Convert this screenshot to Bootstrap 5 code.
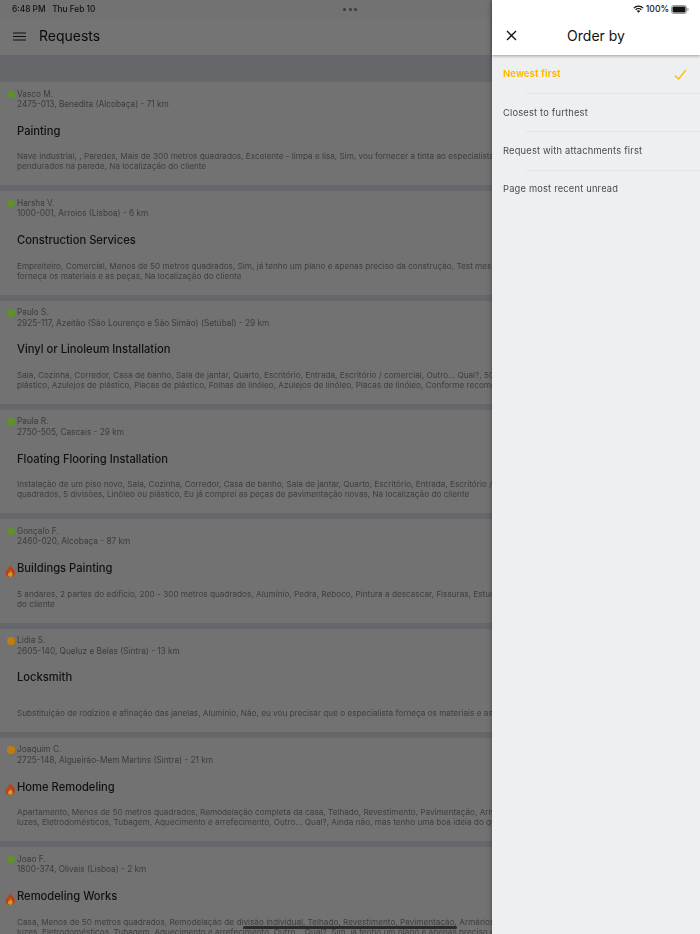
<!DOCTYPE html>
<html lang="en">
<head>
<meta charset="utf-8">
<title>Requests</title>
<link href="https://cdn.jsdelivr.net/npm/bootstrap@5.3.0/dist/css/bootstrap.min.css" rel="stylesheet">
<style>
html,body{margin:0;height:934px;overflow:hidden;background:#727272;}
body{font-family:Inter,"Noto Sans",sans-serif;}
.shell{width:700px;height:934px;position:relative;overflow:hidden;}
.dimside{width:492px;height:934px;overflow:hidden;background:#727272;flex:none;}
.dimwide{width:700px;filter:blur(.35px);}
.statusline{height:18px;font-size:8.3px;font-weight:500;color:#111;padding:0 12px;}
.statusline .grow{flex:1 1 0;}
.dots{display:flex;gap:2.5px;}
.dots i{width:3px;height:3px;border-radius:50%;background:#3a3a3a;display:block;}
.reqhead{height:37px;padding-left:13px;gap:13px;background:#747474;}
.reqhead h1{font-size:14px;font-weight:400;margin:0;color:#0a0a0a;}
.filterstrip{height:27px;background:#65676a;}
.reqlist{background:#65676a;}
.reqitem{height:103.33px;margin-bottom:6px;background:#727272;padding:6.5px 0 14px 7px;}
.who{font-size:8.27px;line-height:10.5px;color:#3c3c3c;gap:2.5px;}
.pin{width:7.5px;height:7.5px;border-radius:50%;flex:none;margin-top:2px;display:block;}
.pin-g{background:#5f9129;}
.pin-o{background:#c27b0c;}
.who-lines{white-space:nowrap;}
.job{font-size:11.2px;font-weight:500;line-height:14px;color:#111;margin:14.3px 0 0 10px;position:relative;}
.flame{position:absolute;left:-12.5px;top:3.5px;width:10.5px;height:12px;}
.desc{font-size:8.2px;line-height:10px;color:#3e3e3e;margin:auto 0 0 10px;white-space:nowrap;}
.orderside{width:208px;height:934px;background:#eeeff1;flex:none;box-shadow:0 0 5px rgba(0,0,0,.35);position:relative;}
.ordertop{background:#fff;height:55px;box-shadow:0 1px 3px rgba(0,0,0,.35);position:relative;}
.ordertop .sb{height:18px;font-size:8.6px;font-weight:500;color:#111;padding-right:11px;gap:2px;}
.ordertitle{height:37px;position:relative;}
.ordertitle h2{font-size:14px;font-weight:400;margin:0;color:#111;}
.xbtn{position:absolute;left:14px;top:12px;width:11px;height:11px;display:block;}
.opts{padding:0;margin:0;list-style:none;filter:blur(.25px);}
.opts li{height:38.2px;font-size:9.3px;color:#4a4a4a;padding:1px 0 0 11px;position:relative;letter-spacing:.2px;}
.opts li+li::before{content:"";position:absolute;left:34px;right:0;top:0;border-top:1px solid #e3e4e6;}
.opts li.on{color:#ffba00;font-weight:700;padding-top:0;}
.tick{position:absolute;right:13px;top:14px;width:13px;height:11px;}
.homebar{position:absolute;left:243px;top:926px;width:214px;height:3px;border-radius:2px;background:#2c2c2c;}
</style>
</head>
<body>
<div class="shell d-flex">
  <div class="dimside">
    <div class="dimwide">
      <div class="statusline d-flex align-items-center">
        <span class="grow">6:48 PM&nbsp;&nbsp;&nbsp;Thu Feb 10</span>
        <span class="dots"><i></i><i></i><i></i></span>
        <span class="grow"></span>
      </div>
      <div class="reqhead d-flex align-items-center">
        <svg width="13" height="9" viewBox="0 0 13 9"><path d="M0 1h13M0 4.500h13M0 8h13" stroke="#111" stroke-width="1.200"/></svg>
        <h1>Requests</h1>
      </div>
      <div class="filterstrip"></div>
      <div class="reqlist">

        <div class="reqitem d-flex flex-column">
          <div class="who d-flex"><span class="pin pin-g"></span><div class="who-lines">Vasco M.<br>2475-013, Benedita (Alcobaça) - 71 km</div></div>
          <div class="job">Painting</div>
          <div class="desc">Nave industrial, , Paredes, Mais de 300 metros quadrados, Excelente - limpa e lisa, Sim, vou fornecer a tinta ao especialista<br>pendurados na parede, Na localização do cliente</div>
        </div>

        <div class="reqitem d-flex flex-column">
          <div class="who d-flex"><span class="pin pin-g"></span><div class="who-lines">Harsha V.<br>1000-001, Arroios (Lisboa) - 6 km</div></div>
          <div class="job">Construction Services</div>
          <div class="desc">Empreiteiro, Comercial, Menos de 50 metros quadrados, Sim, já tenho um plano e apenas preciso da construção, Test mess<br>forneça os materiais e as peças, Na localização do cliente</div>
        </div>

        <div class="reqitem d-flex flex-column">
          <div class="who d-flex"><span class="pin pin-g"></span><div class="who-lines">Paulo S.<br>2925-117, Azeitão (São Lourenço e São Simão) (Setúbal) - 29 km</div></div>
          <div class="job">Vinyl or Linoleum Installation</div>
          <div class="desc">Sala, Cozinha, Corredor, Casa de banho, Sala de jantar, Quarto, Escritório, Entrada, Escritório / comercial, Outro... Qual?, 50<br>plástico, Azulejos de plástico, Placas de plástico, Folhas de linóleo, Azulejos de linóleo, Placas de linóleo, Conforme recome</div>
        </div>

        <div class="reqitem d-flex flex-column">
          <div class="who d-flex"><span class="pin pin-g"></span><div class="who-lines">Paula R.<br>2750-505, Cascais - 29 km</div></div>
          <div class="job">Floating Flooring Installation</div>
          <div class="desc">Instalação de um piso novo, Sala, Cozinha, Corredor, Casa de banho, Sala de jantar, Quarto, Escritório, Entrada, Escritório /<br>quadrados, 5 divisões, Linóleo ou plástico, Eu já comprei as peças de pavimentação novas, Na localização do cliente</div>
        </div>

        <div class="reqitem d-flex flex-column">
          <div class="who d-flex"><span class="pin pin-g"></span><div class="who-lines">Gonçalo F.<br>2460-020, Alcobaça - 87 km</div></div>
          <div class="job"><svg class="flame" viewBox="0 0 12 14"><path d="M6 0c.6 2.400 4.800 4.400 5.400 8.200C11.900 11.500 9.200 14 6 14S.2 11.700.6 8.600c.2-1.600 1-2.800 1.700-3.600.2 1 .6 1.700 1.300 2C3.400 4.400 4.400 1.800 6 0z" fill="#b8431a"/><path d="M6.200 6.500c.4 1.500 2.500 2.700 2.500 4.600 0 1.600-1.200 2.700-2.700 2.700s-2.700-1.100-2.700-2.600c0-1 .6-1.800 1.200-2.300.1.500.3.800.7 1 0-1.400.3-2.600 1-3.400z" fill="#cf9a2a"/></svg>Buildings Painting</div>
          <div class="desc">5 andares, 2 partes do edifício, 200 - 300 metros quadrados, Alumínio, Pedra, Reboco, Pintura a descascar, Fissuras, Estuc<br>do cliente</div>
        </div>

        <div class="reqitem d-flex flex-column">
          <div class="who d-flex"><span class="pin pin-o"></span><div class="who-lines">Lidia S.<br>2605-140, Queluz e Belas (Sintra) - 13 km</div></div>
          <div class="job">Locksmith</div>
          <div class="desc">Substituição de rodízios e afinação das janelas, Alumínio, Não, eu vou precisar que o especialista forneça os materiais e as</div>
        </div>

        <div class="reqitem d-flex flex-column">
          <div class="who d-flex"><span class="pin pin-o"></span><div class="who-lines">Joaquim C.<br>2725-148, Algueirão-Mem Martins (Sintra) - 21 km</div></div>
          <div class="job"><svg class="flame" viewBox="0 0 12 14"><path d="M6 0c.6 2.400 4.800 4.400 5.400 8.200C11.900 11.500 9.200 14 6 14S.2 11.700.6 8.600c.2-1.600 1-2.800 1.700-3.600.2 1 .6 1.700 1.300 2C3.400 4.400 4.400 1.800 6 0z" fill="#b8431a"/><path d="M6.200 6.500c.4 1.500 2.500 2.700 2.500 4.600 0 1.600-1.200 2.700-2.700 2.700s-2.700-1.100-2.700-2.600c0-1 .6-1.800 1.200-2.300.1.500.3.800.7 1 0-1.400.3-2.600 1-3.400z" fill="#cf9a2a"/></svg>Home Remodeling</div>
          <div class="desc">Apartamento, Menos de 50 metros quadrados, Remodelação completa da casa, Telhado, Revestimento, Pavimentação, Arm<br>luzes, Eletrodomésticos, Tubagem, Aquecimento e arrefecimento, Outro... Qual?, Ainda não, mas tenho uma boa ideia do qu</div>
        </div>

        <div class="reqitem d-flex flex-column">
          <div class="who d-flex"><span class="pin pin-g"></span><div class="who-lines">Joao F.<br>1800-374, Olivais (Lisboa) - 2 km</div></div>
          <div class="job"><svg class="flame" viewBox="0 0 12 14"><path d="M6 0c.6 2.400 4.800 4.400 5.400 8.200C11.900 11.500 9.200 14 6 14S.2 11.700.6 8.600c.2-1.600 1-2.800 1.700-3.600.2 1 .6 1.700 1.300 2C3.400 4.400 4.400 1.800 6 0z" fill="#b8431a"/><path d="M6.200 6.500c.4 1.500 2.500 2.700 2.500 4.600 0 1.600-1.200 2.700-2.700 2.700s-2.700-1.100-2.700-2.600c0-1 .6-1.800 1.200-2.300.1.500.3.800.7 1 0-1.400.3-2.600 1-3.400z" fill="#cf9a2a"/></svg>Remodeling Works</div>
          <div class="desc">Casa, Menos de 50 metros quadrados, Remodelação de divisão individual, Telhado, Revestimento, Pavimentação, Armários<br>luzes, Eletrodomésticos, Tubagem, Aquecimento e arrefecimento, Outro... Qual?, Sim, já tenho um plano e apenas preciso d</div>
        </div>

      </div>
    </div>
  </div>
  <div class="homebar"></div>
  <div class="orderside">
    <div class="ordertop">
      <div class="sb d-flex align-items-center justify-content-end">
        <svg width="11" height="8" viewBox="0 0 11 8"><path d="M.4 2.700a7.200 7.200 0 0 1 10.200 0l-.9.900a5.900 5.900 0 0 0-8.400 0zM2.100 4.400a4.800 4.800 0 0 1 6.800 0l-.9.900a3.500 3.500 0 0 0-5 0zM3.800 6.100a2.400 2.400 0 0 1 3.400 0L5.500 7.800z" fill="#111"/></svg>
        <span>100%</span>
        <svg width="18" height="9" viewBox="0 0 18 9"><rect x=".5" y=".5" width="15" height="8" rx="2" fill="none" stroke="#999"/><rect x="1.500" y="1.500" width="13" height="6" rx="1" fill="#111"/><rect x="16.300" y="3" width="1.200" height="3" rx=".6" fill="#999"/></svg>
      </div>
      <div class="ordertitle d-flex align-items-center justify-content-center">
        <svg class="xbtn" viewBox="0 0 11 11"><path d="M1 1l9 9M10 1l-9 9" stroke="#111" stroke-width="1.300" fill="none"/></svg>
        <h2>Order by</h2>
      </div>
    </div>
    <ul class="opts">
      <li class="on d-flex align-items-center">Newest first
        <svg class="tick" viewBox="0 0 13 11"><path d="M1 6.500l3.500 3.500L12 1" stroke="#ffba00" stroke-width="1.300" fill="none"/></svg>
      </li>
      <li class="d-flex align-items-center">Closest to furthest</li>
      <li class="d-flex align-items-center">Request with attachments first</li>
      <li class="d-flex align-items-center">Page most recent unread</li>
    </ul>
  </div>
</div>
<script src="https://cdn.jsdelivr.net/npm/bootstrap@5.3.0/dist/js/bootstrap.bundle.min.js"></script>
</body>
</html>
